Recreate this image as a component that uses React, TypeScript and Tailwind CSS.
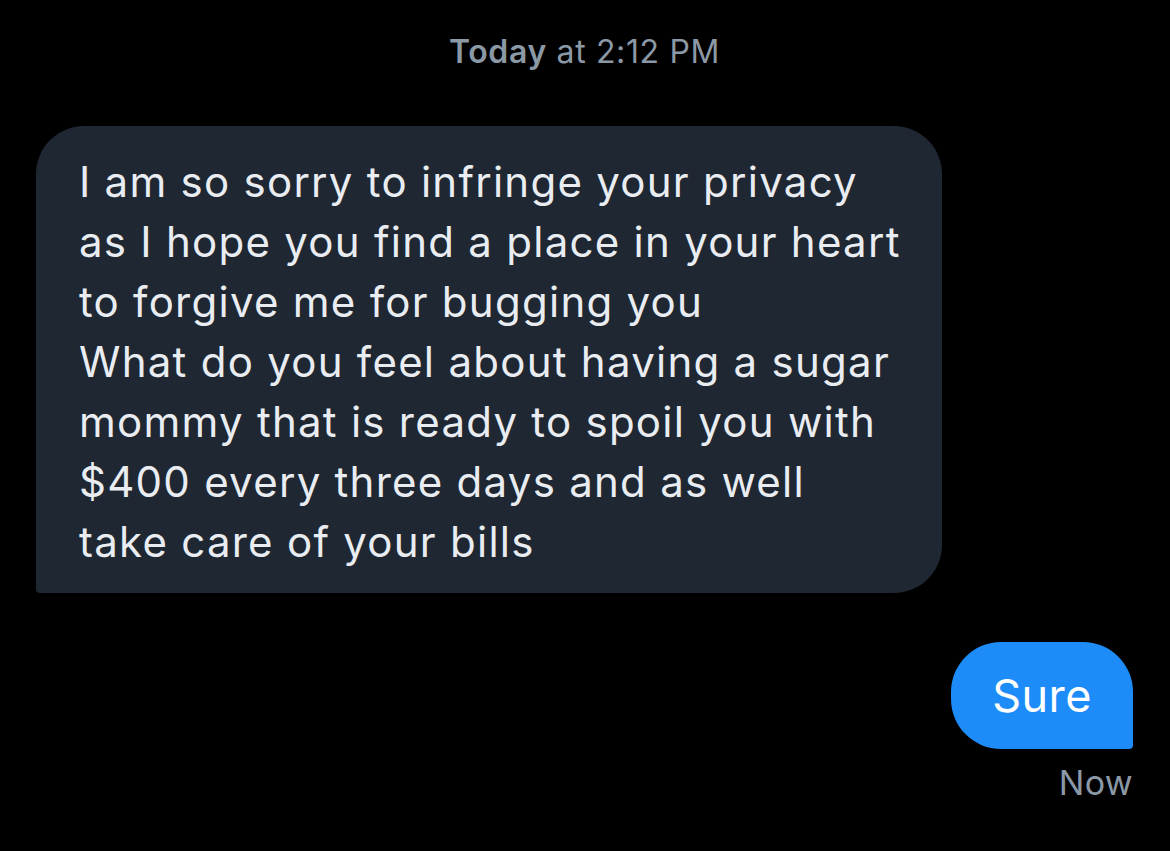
export default function App() {
  return (
    <div className="min-h-[851px] w-full bg-black pl-[36px] pr-[37px] pt-[33px] font-['Inter','Liberation_Sans',sans-serif] text-[#e9edf1]">
      {/* Timestamp */}
      <div className="text-center text-[32px] leading-[38px] tracking-[0.02em] text-[#8b98a5]">
        <span className="font-semibold">Today</span> at 2:12 PM
      </div>

      {/* Incoming message */}
      <div className="mt-[55px] flex">
        <div className="w-[906px] rounded-[48px] rounded-bl-[4px] bg-[#1e2732] pl-[43px] pr-[30px] pt-[26px] pb-[21px] text-[42px] leading-[60px] tracking-[0.03em] whitespace-nowrap">
          I am so sorry to infringe your privacy
          <br />
          as I hope you find a place in your heart
          <br />
          to forgive me for bugging you
          <br />
          What do you feel about having a sugar
          <br />
          mommy that is ready to spoil you with
          <br />
          $400 every three days and as well
          <br />
          take care of your bills
        </div>
      </div>

      {/* Outgoing message */}
      <div className="mt-[49px] flex flex-col items-end">
        <div className="flex h-[107px] w-[182px] items-center justify-center rounded-[50px] rounded-br-[4px] bg-[#1d8cf8] text-[45px] tracking-[0.01em] text-white">
          Sure
        </div>
        <div className="mt-[14px] text-[34px] leading-[40px] tracking-[0.01em] text-[#8b98a5]">Now</div>
      </div>
    </div>
  );
}
